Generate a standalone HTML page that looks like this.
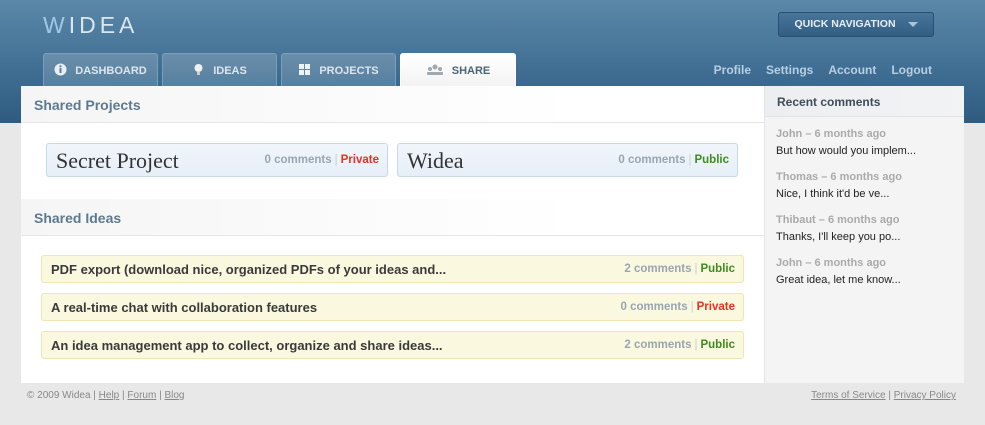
<!DOCTYPE html>
<html><head><meta charset="utf-8"><style>
*{margin:0;padding:0;box-sizing:border-box}
body{width:985px;height:425px;background:#e8e8e8;font-family:"Liberation Sans",sans-serif;position:relative;overflow:hidden}
.hdr{position:absolute;left:0;top:0;width:985px;height:123px;background:linear-gradient(#5b88a8,#3f6d92 60%,#2f5b80)}
.logo{position:absolute;left:43px;top:12px;font-size:23px;letter-spacing:4px;color:#d9e6f0;font-weight:normal}
.logo b{color:#9fc8e6;font-weight:normal}
.qn{position:absolute;left:778px;top:12px;width:156px;height:25px;background:linear-gradient(#48759a,#335e83);border:1px solid #29506f;border-radius:3px;color:#e6eef5;font-size:10.5px;font-weight:bold;text-align:center;line-height:23px}
.qn span{display:inline-block;width:0;height:0;border-left:5px solid transparent;border-right:5px solid transparent;border-top:5px solid #a9c2d6;margin-left:12px;vertical-align:middle}
.tab{position:absolute;top:53px;height:33px;width:115px;background:linear-gradient(#6a8eab,#56809f);border:1px solid #78a0bd;border-bottom:none;border-radius:3px 3px 0 0;color:#dbe6ef;font-size:11px;font-weight:bold;line-height:34px;text-align:center}
.tab.on{background:linear-gradient(#fff,#f3f3f3);color:#4b6478;border-color:#fff;width:116px}
.ic{display:inline-block;width:13px;height:13px;vertical-align:-2px;margin-right:8px}
.links{position:absolute;top:63px;right:53px;font-size:12px;color:#b7cfe2;font-weight:bold}
.links span{margin-left:15px}
.main{position:absolute;left:21px;top:86px;width:743px;height:297px;background:#fff}
.side{position:absolute;left:764px;top:86px;width:200px;height:297px;background:#f4f4f4;border-left:1px solid #e3e3e3}
.sh{height:31px;background:linear-gradient(90deg,#eceef1,#f2f3f5);border-bottom:1px solid #dde4ea;padding:9px 12px;font-size:12px;font-weight:bold;color:#3f4c57}
.ttl{height:37px;border-bottom:1px solid #e6e6e6;background:linear-gradient(90deg,#f5f5f5,#fff 75%);padding:11px 13px;font-size:14px;font-weight:bold;color:#5d7a90}
.pbox{position:absolute;top:57px;height:34px;background:linear-gradient(#f1f6fb,#e6eef7);border:1px solid #c9d8e6;border-radius:3px}
.pbox .n{position:absolute;left:9px;top:4px;font-family:"Liberation Serif",serif;font-size:22px;color:#333}
.meta{position:absolute;right:8px;font-size:11.5px;font-weight:bold;color:#98a6b2}
.meta i{font-style:normal;color:#ccc;margin:0 3px;font-weight:normal}
.red{color:#e8311f}.grn{color:#3e8c1f}
.ibox{position:absolute;left:20px;width:703px;height:28px;background:#faf8df;border:1px solid #efe6b4;border-radius:3px}
.ibox .n{position:absolute;left:9px;top:6px;font-size:13px;font-weight:bold;color:#3a3a3a}
.ibox .meta{top:7px}
.c{padding:0 11px;margin-top:9px;font-size:11px;line-height:17px}
.c .a{color:#aaa;font-weight:bold}
.c .t{color:#222}
.foot{position:absolute;top:390px;font-size:10px;color:#888}
.foot u{color:#888}
</style></head><body>
<div class="hdr"></div>
<div class="logo"><b>W</b>IDEA</div>
<div class="qn">QUICK NAVIGATION<span></span></div>
<div class="tab" style="left:43px"><svg class="ic" viewBox="0 0 13 13"><circle cx="6.5" cy="6.5" r="6" fill="#e8eef3"/><rect x="5.5" y="5" width="2" height="5" fill="#56809f"/><circle cx="6.5" cy="3.3" r="1.1" fill="#56809f"/></svg>DASHBOARD</div>
<div class="tab" style="left:162px"><svg class="ic" viewBox="0 0 13 13"><circle cx="6.5" cy="5" r="4" fill="#f0f0f0"/><rect x="5" y="8.5" width="3" height="3.5" fill="#ccc"/></svg>IDEAS</div>
<div class="tab" style="left:281px"><svg class="ic" viewBox="0 0 13 13" fill="#eef2f5"><rect x="1" y="1" width="5" height="5"/><rect x="7" y="1" width="5" height="5"/><rect x="1" y="7" width="5" height="5"/><rect x="7" y="7" width="5" height="5"/></svg>PROJECTS</div>
<div class="tab on" style="left:400px"><svg class="ic" style="width:18px" viewBox="0 0 18 13" fill="#a0a8b0"><circle cx="9" cy="4" r="2.5"/><circle cx="4" cy="6" r="2"/><circle cx="14" cy="6" r="2"/><rect x="1" y="9" width="16" height="3" rx="1"/></svg>SHARE</div>
<div class="links"><span>Profile</span><span>Settings</span><span>Account</span><span>Logout</span></div>
<div class="main">
<div class="ttl">Shared Projects</div>
<div class="pbox" style="left:25px;width:342px"><div class="n">Secret Project</div><div class="meta" style="top:10px">0 comments<i>|</i><span class="red">Private</span></div></div>
<div class="pbox" style="left:376px;width:341px"><div class="n">Widea</div><div class="meta" style="top:10px">0 comments<i>|</i><span class="grn">Public</span></div></div>
<div class="ttl" style="position:absolute;top:113px;width:100%">Shared Ideas</div>
<div class="ibox" style="top:169px"><div class="n">PDF export (download nice, organized PDFs of your ideas and...</div><div class="meta">2 comments<i>|</i><span class="grn">Public</span></div></div>
<div class="ibox" style="top:207px"><div class="n">A real-time chat with collaboration features</div><div class="meta">0 comments<i>|</i><span class="red">Private</span></div></div>
<div class="ibox" style="top:245px"><div class="n">An idea management app to collect, organize and share ideas...</div><div class="meta">2 comments<i>|</i><span class="grn">Public</span></div></div>
</div>
<div class="side">
<div class="sh">Recent comments</div>
<div class="c"><div class="a">John – 6 months ago</div><div class="t">But how would you implem...</div></div>
<div class="c"><div class="a">Thomas – 6 months ago</div><div class="t">Nice, I think it'd be ve...</div></div>
<div class="c"><div class="a">Thibaut – 6 months ago</div><div class="t">Thanks, I'll keep you po...</div></div>
<div class="c"><div class="a">John – 6 months ago</div><div class="t">Great idea, let me know...</div></div>
</div>
<div class="foot" style="left:27px">© 2009 Widea | <u>Help</u> | <u>Forum</u> | <u>Blog</u></div>
<div class="foot" style="right:29px"><u>Terms of Service</u> | <u>Privacy Policy</u></div>
</body></html>
